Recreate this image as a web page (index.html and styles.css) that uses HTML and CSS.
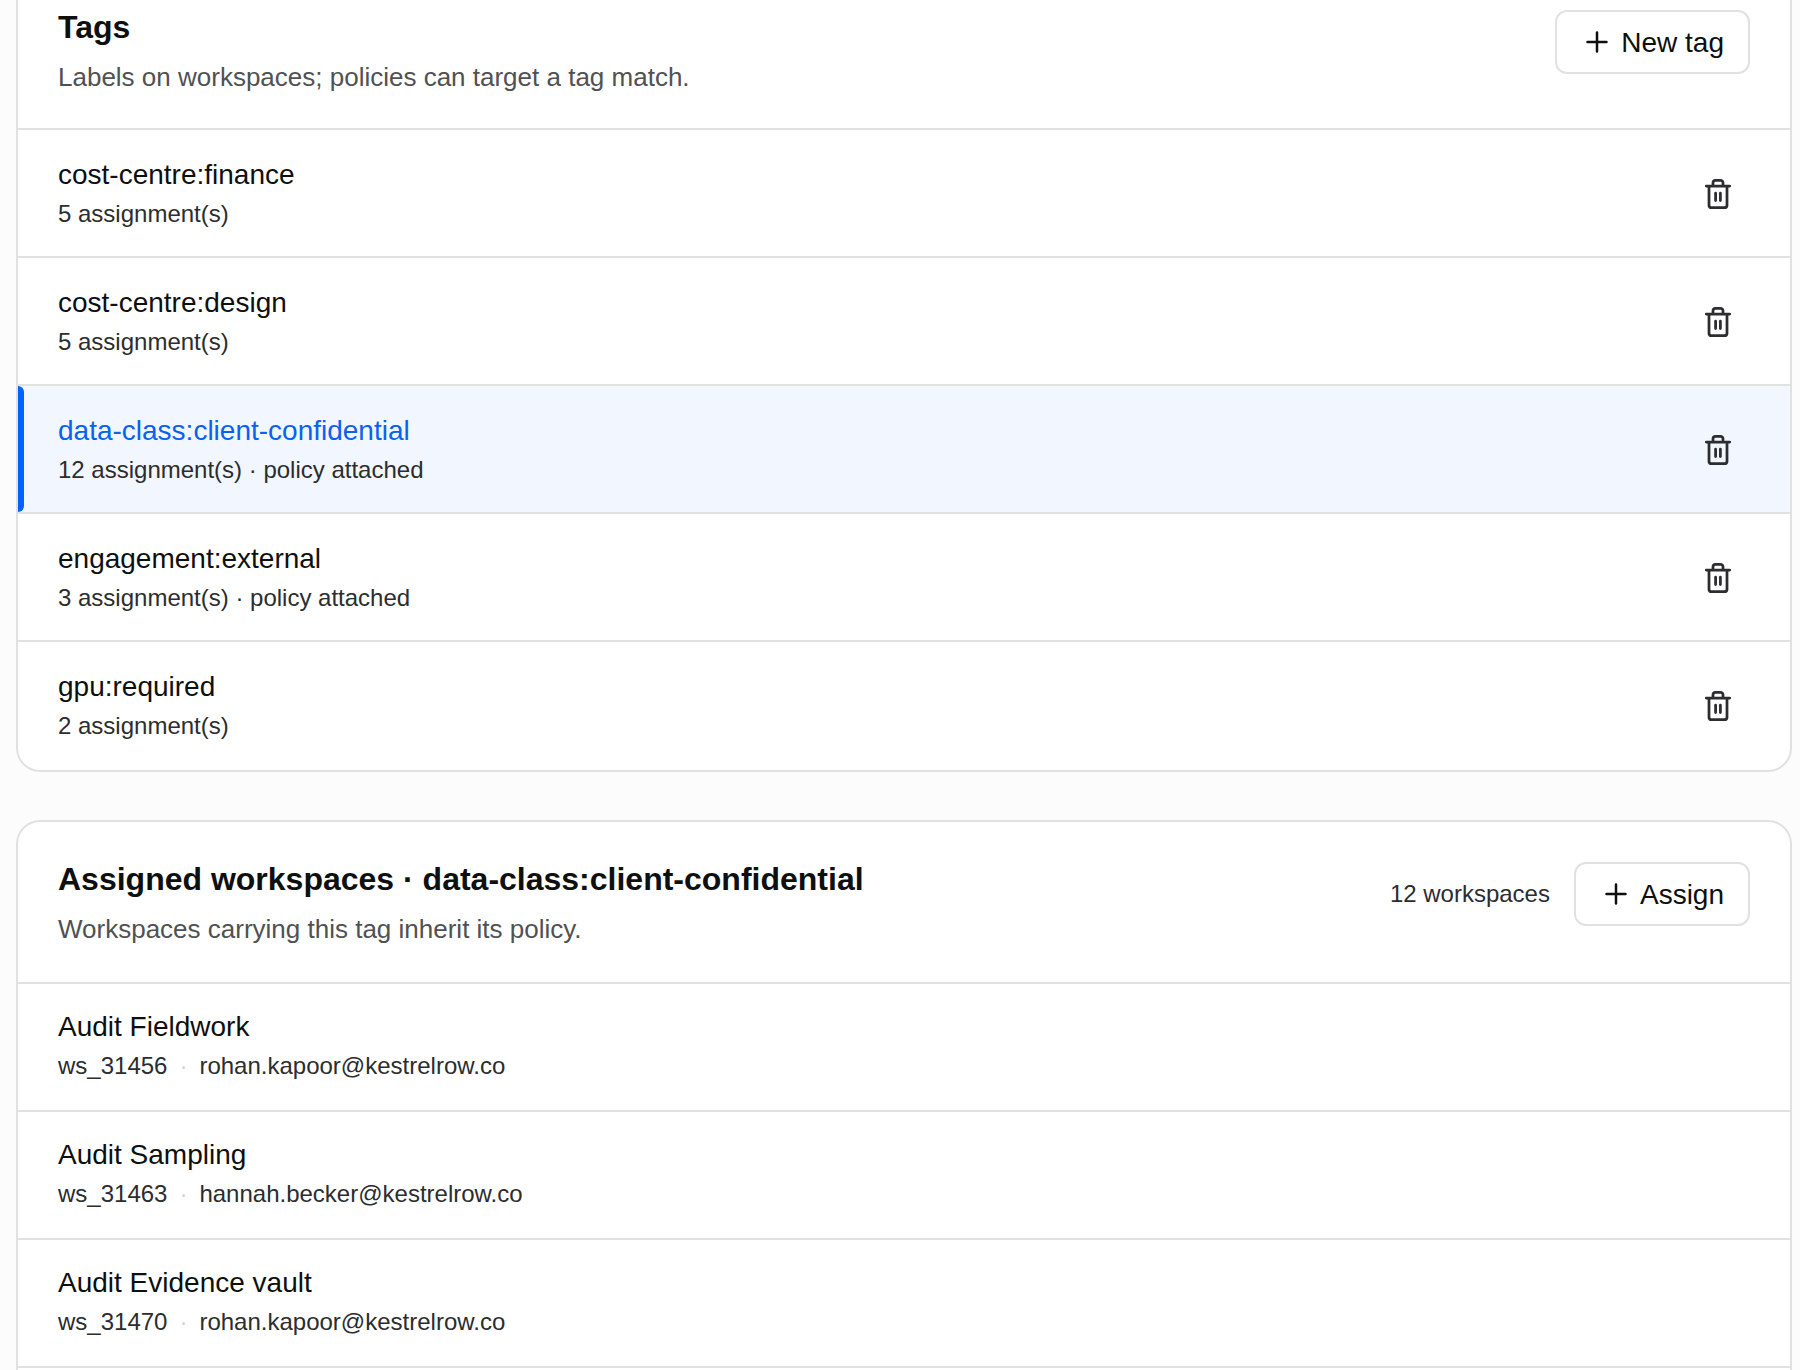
FILE: index.html
```html
<!DOCTYPE html>
<html lang="en">
  <head>
    <meta charset="UTF-8" />
    <meta name="viewport" content="width=device-width, initial-scale=1" />
    <title>Tags</title>
    <link rel="stylesheet" href="styles.css">
  </head>

  <body>
    <!-- shared icons -->
    <svg class="sprite" aria-hidden="true">
      <symbol id="icon-plus" viewBox="0 0 32 32">
        <path d="M16 6.5v19M6.5 16h19" />
      </symbol>
      <symbol id="icon-trash" viewBox="0 0 32 32">
        <path d="M4.3 9h23.4M7 9v19.2a2.5 2.5 0 0 0 2.5 2.5h13a2.5 2.5 0 0 0 2.5-2.5V9M11 9V5.8a2.5 2.5 0 0 1 2.5-2.5h5a2.5 2.5 0 0 1 2.5 2.5V9M13.6 16v7.6M18.4 16v7.6" />
      </symbol>
    </svg>

    <main>
      <section class="card card-open">
        <header class="card-header">
          <div class="card-heading">
            <h2>Tags</h2>
            <p>Labels on workspaces; policies can target a tag match.</p>
          </div>
          <div class="card-actions">
            <button class="btn" type="button"><svg class="icon"><use href="#icon-plus" /></svg>New tag</button>
          </div>
        </header>

        <ul class="list tag-list">
          <li class="row">
            <div class="row-text">
              <span class="name">cost-centre:finance</span>
              <span class="meta">5 assignment(s)</span>
            </div>
            <button class="icon-btn" type="button" aria-label="Delete tag"><svg class="icon"><use href="#icon-trash" /></svg></button>
          </li>
          <li class="row">
            <div class="row-text">
              <span class="name">cost-centre:design</span>
              <span class="meta">5 assignment(s)</span>
            </div>
            <button class="icon-btn" type="button" aria-label="Delete tag"><svg class="icon"><use href="#icon-trash" /></svg></button>
          </li>
          <li class="row selected">
            <div class="row-text">
              <span class="name">data-class:client-confidential</span>
              <span class="meta">12 assignment(s) · policy attached</span>
            </div>
            <button class="icon-btn" type="button" aria-label="Delete tag"><svg class="icon"><use href="#icon-trash" /></svg></button>
          </li>
          <li class="row">
            <div class="row-text">
              <span class="name">engagement:external</span>
              <span class="meta">3 assignment(s) · policy attached</span>
            </div>
            <button class="icon-btn" type="button" aria-label="Delete tag"><svg class="icon"><use href="#icon-trash" /></svg></button>
          </li>
          <li class="row">
            <div class="row-text">
              <span class="name">gpu:required</span>
              <span class="meta">2 assignment(s)</span>
            </div>
            <button class="icon-btn" type="button" aria-label="Delete tag"><svg class="icon"><use href="#icon-trash" /></svg></button>
          </li>
        </ul>
      </section>

      <section class="card">
        <header class="card-header">
          <div class="card-heading">
            <h2>Assigned workspaces · data-class:client-confidential</h2>
            <p>Workspaces carrying this tag inherit its policy.</p>
          </div>
          <div class="card-actions">
            <span class="count">12 workspaces</span>
            <button class="btn" type="button"><svg class="icon"><use href="#icon-plus" /></svg>Assign</button>
          </div>
        </header>

        <ul class="list">
          <li class="row">
            <div class="row-text">
              <span class="name">Audit Fieldwork</span>
              <span class="meta">ws_31456<span class="dot">·</span>rohan.kapoor@kestrelrow.co</span>
            </div>
          </li>
          <li class="row">
            <div class="row-text">
              <span class="name">Audit Sampling</span>
              <span class="meta">ws_31463<span class="dot">·</span>hannah.becker@kestrelrow.co</span>
            </div>
          </li>
          <li class="row">
            <div class="row-text">
              <span class="name">Audit Evidence vault</span>
              <span class="meta">ws_31470<span class="dot">·</span>rohan.kapoor@kestrelrow.co</span>
            </div>
          </li>
        </ul>
      </section>
    </main>
  </body>
</html>
```
FILE: styles.css
```css
:root {
  --bg: #fcfcfc;
  --panel-bg: #fff;
  --border: #e0e2e2;
  --accent: #0062ff;
  --accent-text: #0962ee;
  --selected-bg: #f2f6fe;
  --text: #0e0f0f;
  --text-soft: #2c2d2e;
  --text-muted: #505152;
}

* {
  box-sizing: border-box;
}

body {
  margin: 0;
  background: var(--bg);
  color: var(--text);
  font-family: "Liberation Sans", Arial, sans-serif;
}

main {
  display: flex;
  flex-direction: column;
  gap: 48px;
  min-height: 100vh;
  padding: 0 8px 0 16px;
}

.sprite {
  display: none;
}

/* cards */
.card {
  background: var(--panel-bg);
  border: 2px solid var(--border);
  border-radius: 24px;
  overflow: hidden;
}

/* last card runs to the bottom of the window */
.card:last-child {
  flex-grow: 1;
  border-bottom: none;
  border-radius: 24px 24px 0 0;
}

.card-open {
  border-top: none;
  border-radius: 0 0 24px 24px;
}

.card-header {
  display: flex;
  justify-content: space-between;
  align-items: flex-start;
  gap: 24px;
  padding: 40px 40px 36px;
  border-bottom: 2px solid var(--border);
}

.card-open .card-header {
  padding-top: 10px;
  padding-bottom: 34px;
}

.card-heading {
  display: flex;
  flex-direction: column;
  gap: 16px;
}

.card-heading h2 {
  margin: 0;
  font-size: 32px;
  line-height: 34px;
  font-weight: 700;
}

.card-heading p {
  margin: 0;
  font-size: 26px;
  line-height: 34px;
  color: var(--text-muted);
}

.card-actions {
  display: flex;
  align-items: center;
  gap: 24px;
}

.count {
  font-size: 24px;
  color: var(--text-soft);
}

/* buttons */
.btn {
  display: flex;
  align-items: center;
  gap: 8px;
  height: 64px;
  padding: 0 24px;
  border: 2px solid var(--border);
  border-radius: 12px;
  background: var(--panel-bg);
  color: var(--text);
  font: inherit;
  font-size: 28px;
  line-height: 35px;
  cursor: pointer;
}

.icon-btn {
  display: grid;
  place-items: center;
  width: 64px;
  height: 64px;
  padding: 0;
  border: none;
  border-radius: 12px;
  background: none;
  color: var(--text-soft);
  cursor: pointer;
}

.icon {
  width: 32px;
  height: 32px;
  fill: none;
  stroke: currentColor;
  stroke-width: 2.5;
  stroke-linecap: round;
  stroke-linejoin: round;
}

.icon-btn .icon {
  stroke-width: 2.75;
}

/* rows */
.list {
  margin: 0;
  padding: 0;
  list-style: none;
}

.row {
  position: relative;
  display: flex;
  justify-content: space-between;
  align-items: center;
  padding: 22px 40px 26px;
  border-bottom: 2px solid var(--border);
}

.tag-list .row {
  padding: 24px 40px;
}

.tag-list .row:last-child {
  border-bottom-color: transparent;
}

.row-text {
  display: flex;
  flex-direction: column;
}

.name {
  font-size: 28px;
  line-height: 42px;
}

.meta {
  font-size: 24px;
  line-height: 36px;
  color: var(--text-soft);
}

.dot {
  margin: 0 12px;
  color: #d0d2d2;
}

.selected {
  background: var(--selected-bg);
}

.selected .name {
  color: var(--accent-text);
}

.selected::before {
  content: "";
  position: absolute;
  top: 0;
  bottom: 0;
  left: 0;
  width: 6px;
  border-radius: 0 6px 6px 0;
  background: var(--accent);
}
```
